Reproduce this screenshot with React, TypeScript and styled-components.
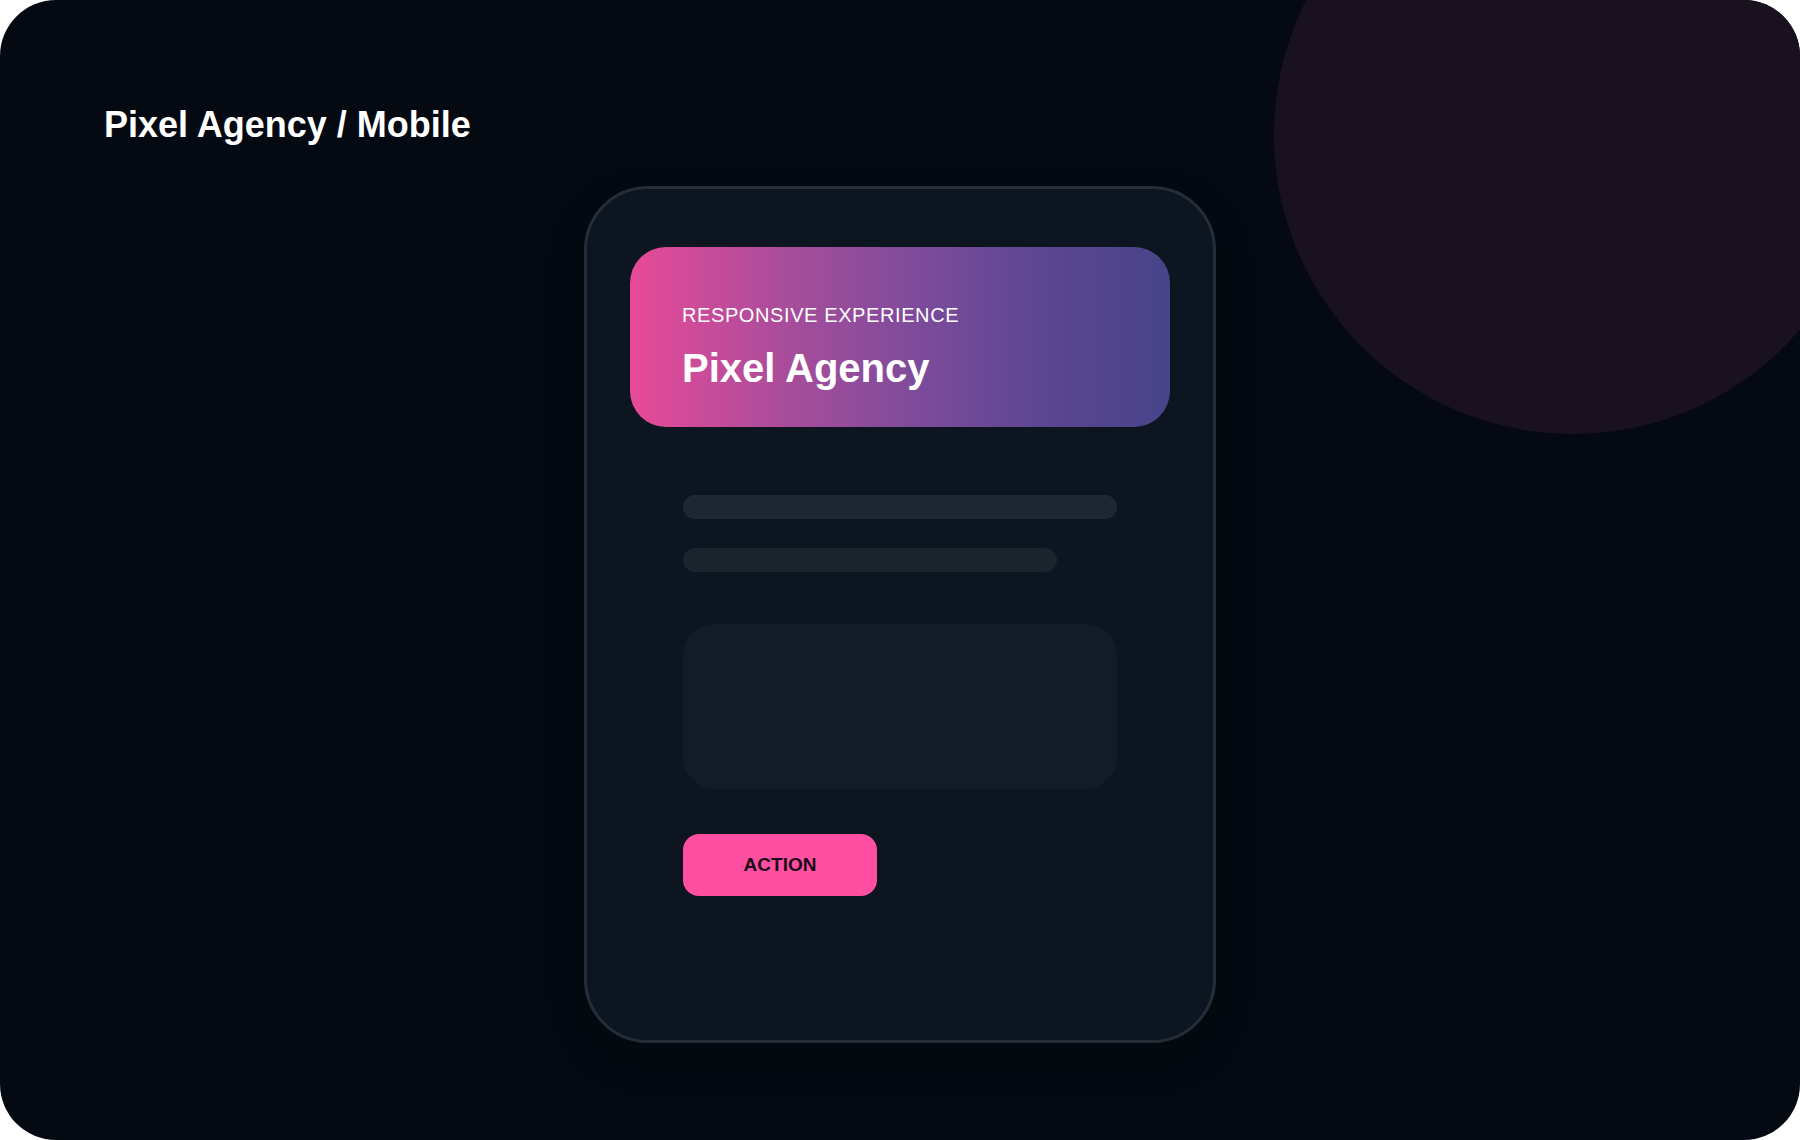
import React from "react";
import styled, { createGlobalStyle } from "styled-components";

const Global = createGlobalStyle`
  html, body { margin: 0; padding: 0; background: #ffffff; }
  body { font-family: "Liberation Sans", Arial, sans-serif; }
  * { box-sizing: border-box; }
`;

const Canvas = styled.div`
  position: relative;
  width: 1800px;
  height: 1140px;
  background: #050a12;
  border-radius: 56px;
  overflow: hidden;
  padding: 104px;
  display: flex;
  flex-direction: column;
  align-items: center;
`;

const Glow = styled.div`
  position: absolute;
  top: -164px;
  right: -72px;
  width: 598px;
  height: 598px;
  border-radius: 50%;
  background: #1a111f;
`;

const PageTitle = styled.h1`
  position: relative;
  align-self: flex-start;
  flex-shrink: 0;
  margin: 0;
  font-size: 36px;
  line-height: 1.15;
  font-weight: 700;
  color: #ffffff;
`;

const Phone = styled.div`
  position: relative;
  flex-shrink: 0;
  margin-top: 41px;
  width: 632px;
  height: 857px;
  border: 3px solid #252d37;
  border-radius: 64px;
  background: #0d1620;
  box-shadow: 0 16px 40px rgba(0, 0, 0, 0.2);
  padding: 58px 43px 0;
  display: flex;
  flex-direction: column;
`;

const Hero = styled.div`
  height: 180px;
  border-radius: 36px;
  background: linear-gradient(90deg, #e74a98 0%, #a64d9b 30%, #7a4b9b 55%, #5a4690 78%, #48448a 100%);
  padding: 57px 52px 0;
  display: flex;
  flex-direction: column;
`;

const Eyebrow = styled.div`
  font-size: 20px;
  line-height: 23px;
  letter-spacing: 0.6px;
  color: #ffffff;
  font-weight: 400;
`;

const HeroTitle = styled.div`
  margin-top: 18px;
  font-size: 40px;
  line-height: 46px;
  font-weight: 700;
  color: #ffffff;
`;

const Body = styled.div`
  padding: 68px 53px 0;
  display: flex;
  flex-direction: column;
`;

const Line = styled.div<{ $w: number; $tone: string; $gap: number }>`
  height: 24px;
  border-radius: 12px;
  width: ${(p) => p.$w}px;
  background: ${(p) => p.$tone};
  margin-top: ${(p) => p.$gap}px;
`;

const Panel = styled.div`
  margin-top: 52px;
  height: 165px;
  border-radius: 32px;
  background: #111c27;
`;

const Action = styled.button`
  margin-top: 45px;
  width: 194px;
  height: 62px;
  border: none;
  border-radius: 16px;
  background: #ff4fa3;
  color: #1c0a16;
  font-family: "Liberation Sans", Arial, sans-serif;
  font-size: 19px;
  font-weight: 700;
  padding: 0;
  cursor: pointer;
`;

export default function App() {
  return (
    <>
      <Global />
      <Canvas>
        <Glow />
        <PageTitle>Pixel Agency / Mobile</PageTitle>
        <Phone>
          <Hero>
            <Eyebrow>RESPONSIVE EXPERIENCE</Eyebrow>
            <HeroTitle>Pixel Agency</HeroTitle>
          </Hero>
          <Body>
            <Line $w={434} $tone="#1f2732" $gap={0} />
            <Line $w={374} $tone="#1b232d" $gap={29} />
            <Panel />
            <Action>ACTION</Action>
          </Body>
        </Phone>
      </Canvas>
    </>
  );
}
